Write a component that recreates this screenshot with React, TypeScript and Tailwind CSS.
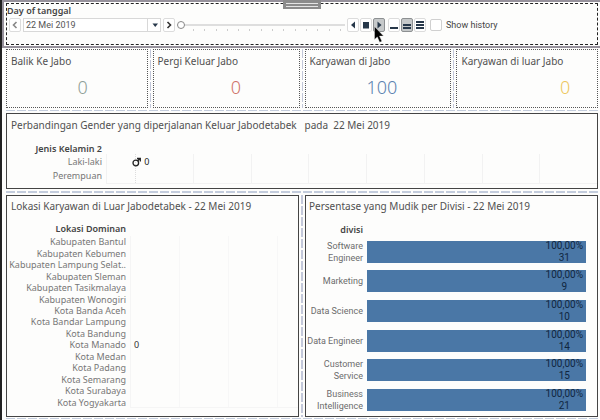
import React, { useState } from "react";

const H_DASH =
  "bg-[repeating-linear-gradient(90deg,#c3ccdc_0_9px,transparent_9px_11px)]";
const V_DASH =
  "bg-[repeating-linear-gradient(180deg,#c3c8da_0_9px,transparent_9px_11px)]";

const kpis = [
  { title: "Balik Ke Jabo", value: "0", tone: "text-[#8f9f98] pl-3", width: "flex-[24]" },
  { title: "Pergi Keluar Jabo", value: "0", tone: "text-[#cf7268] pl-5", width: "flex-[25]" },
  { title: "Karyawan di Jabo", value: "100", tone: "text-[#5a82b0] pl-2", width: "flex-[25]" },
  { title: "Karyawan di luar Jabo", value: "0", tone: "text-[#edc75c] pl-19", width: "flex-[24]" },
];

const places = [
  "Kabupaten Bantul",
  "Kabupaten Kebumen",
  "Kabupaten Lampung Selat..",
  "Kabupaten Sleman",
  "Kabupaten Tasikmalaya",
  "Kabupaten Wonogiri",
  "Kota Banda Aceh",
  "Kota Bandar Lampung",
  "Kota Bandung",
  "Kota Manado",
  "Kota Medan",
  "Kota Padang",
  "Kota Semarang",
  "Kota Surabaya",
  "Kota Yogyakarta",
];

const divisions = [
  { name: "Software Engineer", count: 31 },
  { name: "Marketing", count: 9 },
  { name: "Data Science", count: 10 },
  { name: "Data Engineer", count: 14 },
  { name: "Customer Service", count: 15 },
  { name: "Business Intelligence", count: 21 },
];

function ToolButton({
  label,
  pressed,
  children,
}: {
  label: string;
  pressed?: boolean;
  children: React.ReactNode;
}) {
  return (
    <button
      type="button"
      aria-label={label}
      aria-pressed={pressed}
      className={
        pressed
          ? "flex h-3.5 w-3 shrink-0 items-center justify-center rounded-xs border border-[#8d9092] bg-[#c6c9ca]"
          : "flex h-3.5 w-3 shrink-0 items-center justify-center rounded-xs border border-[#dcdcdc] bg-white"
      }
    >
      {children}
    </button>
  );
}

function Glyph({ d, stroke }: { d: string; stroke?: string }) {
  return (
    <svg viewBox="0 0 10 10" className="size-2.5 shrink-0">
      <path
        d={d}
        fill={stroke ? "none" : "#27384a"}
        stroke={stroke ?? "none"}
        strokeWidth={1.6}
      />
    </svg>
  );
}

function Toolbar() {
  const [day, setDay] = useState("22 Mei 2019");
  const [step, setStep] = useState(0);
  return (
    <header className="relative border-2 border-r-0 border-[#96919b] p-px pr-0.5 pl-0.5 font-[Roboto,'Noto_Sans',sans-serif]">
      <div className="h-[42px] border border-dashed border-[#222]">
        <label
          htmlFor="day"
          className="block font-['Noto_Sans',sans-serif] text-[9px] leading-[13px] font-semibold text-[#444]"
        >
          Day of tanggal
        </label>
        <div className="flex items-center pl-0.5">
          <ToolButton label="Previous day">
            <Glyph d="M6.5 2 3.5 5l3 3" stroke="#888" />
          </ToolButton>
          <div className="relative mx-0.5 w-[138px]">
            <select
              id="day"
              value={day}
              onChange={(e) => setDay(e.target.value)}
              className="block h-3.5 w-full appearance-none border border-[#d8d8d8] bg-white pl-0.5 text-[9px] leading-3 text-[#555]"
            >
              <option>22 Mei 2019</option>
              <option>23 Mei 2019</option>
            </select>
            <span className="pointer-events-none absolute inset-y-0 right-0 flex w-3.5 items-center justify-center border-l border-[#d8d8d8]">
              <Glyph d="M2.500 3.500h5.500L5.250 7z" />
            </span>
          </div>
          <ToolButton label="Next day">
            <Glyph d="M3.500 2 6.500 5l-3 3" stroke="#333" />
          </ToolButton>
          <div className="mx-0.5 w-[168px] pt-1">
            <input
              type="range"
              aria-label="Day slider"
              min={0}
              max={14}
              value={step}
              onChange={(e) => setStep(Number(e.target.value))}
              className="block h-2 w-full appearance-none bg-[linear-gradient(#dedede,#dedede)] bg-[length:100%_2px] bg-center bg-no-repeat [&::-webkit-slider-thumb]:size-2 [&::-webkit-slider-thumb]:appearance-none [&::-webkit-slider-thumb]:rounded-full [&::-webkit-slider-thumb]:border [&::-webkit-slider-thumb]:border-[#888] [&::-webkit-slider-thumb]:bg-white"
            />
            <div className="flex h-1 justify-between pr-1 pl-4">
              {Array.from({ length: 14 }, (_, i) => (
                <span key={i} className="h-0.5 w-px bg-[#ccc]" />
              ))}
            </div>
          </div>
          <div className="relative flex gap-px">
            <ToolButton label="Play backwards">
              <Glyph d="M7 1.500v7L3 5z" />
            </ToolButton>
            <ToolButton label="Stop">
              <Glyph d="M2 2h6v6.500h-6z" />
            </ToolButton>
            <ToolButton label="Play" pressed>
              <Glyph d="M3.500 1.500v7l4-3.500z" />
            </ToolButton>
            <svg
              viewBox="0 0 10 17"
              className="absolute top-2 left-[27px] z-10 h-[17px] w-2.5"
            >
              <path
                d="M.5.500v13l2.800-2.600 2.400 5.400 2.200-1-2.400-5.200h4z"
                fill="#000"
                stroke="#eee"
                strokeWidth={0.4}
              />
            </svg>
          </div>
          <div className="ml-[3px] flex gap-px">
            <ToolButton label="Slow">
              <Glyph d="M1 7h8v2h-8z" />
            </ToolButton>
            <ToolButton label="Normal" pressed>
              <Glyph d="M1 4h8v2h-8zM1 7h8v2h-8z" />
            </ToolButton>
            <ToolButton label="Fast">
              <Glyph d="M1 1h8v2h-8zM1 4h8v2h-8zM1 7h8v2h-8z" />
            </ToolButton>
          </div>
          <label className="ml-1 flex items-center gap-1 text-[9px] leading-3 whitespace-nowrap text-[#444]">
            <input
              type="checkbox"
              className="size-3 appearance-none rounded-xs border border-[#d0d0d0] bg-white"
            />
            Show history
          </label>
        </div>
      </div>
      <button
        type="button"
        aria-label="Move toolbar"
        className="absolute -top-0.5 left-[279px] flex h-[9px] w-[38px] flex-col justify-center gap-0.5 bg-[#8b8b8b] px-[3px]"
      >
        <span className="h-px bg-[#e4e4e4]" />
        <span className="h-px bg-[#e4e4e4]" />
      </button>
    </header>
  );
}

function Kpi({
  title,
  value,
  tone,
  width,
}: {
  title: string;
  value: string;
  tone: string;
  width: string;
}) {
  return (
    <section className={`min-w-0 border border-dotted border-[#555] px-1 pt-[3px] ${width}`}>
      <h2 className="text-[10px] leading-4 whitespace-nowrap">{title}</h2>
      <p className={`pt-1.5 text-center text-[18px] leading-6 font-light ${tone}`}>{value}</p>
    </section>
  );
}

function Gender() {
  return (
    <section className="flex h-[76px] flex-col border border-[#444]">
      <h2 className="pt-[3px] pl-1 text-[10px] leading-4 whitespace-pre">
        {"Perbandingan Gender yang diperjalanan Keluar Jabodetabek   pada  22 Mei 2019"}
      </h2>
      <div className="flex pt-[9px]">
        <div className="w-[95px] shrink-0 text-right text-[9px] text-[#777]">
          <h3 className="leading-[13px] font-semibold text-[#444]">Jenis Kelamin 2</h3>
          <p className="leading-[14px]">Laki-laki</p>
          <p className="leading-[14px]">Perempuan</p>
        </div>
        <div className="mt-3 ml-1 flex h-[30px] flex-1 border-b border-l border-[#f2f2f2]">
          <div className="flex-1" />
          <div className="relative flex-2 border-l border-dotted border-[#ddd] text-[9px] leading-4 text-[#222]">
            <svg
              viewBox="0 0 10 10"
              className="absolute top-[3px] -left-1 size-2.5"
              fill="none"
              stroke="#222"
              strokeWidth={1.3}
            >
              <circle cx="3.800" cy="6" r="2.800" />
              <path d="M5.500 4 8 1.500M5 1.500h3.300V4.500" />
            </svg>
            <span className="ml-2">0</span>
          </div>
          {Array.from({ length: 7 }, (_, i) => (
            <div key={i} className="flex-2 border-l border-[#f2f2f2]" />
          ))}
        </div>
      </div>
    </section>
  );
}

function Locations() {
  return (
    <section className="min-w-0 flex-1 border border-[#444]">
      <h2 className="pt-0.5 pl-1 text-[10px] leading-4 whitespace-nowrap">
        Lokasi Karyawan di Luar Jabodetabek - 22 Mei 2019
      </h2>
      <div className="flex pt-2">
        <div className="w-[119px] shrink-0 text-right text-[9px] text-[#777]">
          <h3 className="leading-[14px] font-semibold text-[#444]">Lokasi Dominan</h3>
          <ul className="grid h-[172px] auto-rows-fr grid-cols-1">
            {places.map((p) => (
              <li key={p} className="flex min-h-0 items-center justify-end leading-[11px] whitespace-nowrap">
                {p}
              </li>
            ))}
          </ul>
        </div>
        <div className="mt-3.5 ml-1 grid h-[172px] flex-1 auto-rows-fr border-b border-l border-[#f5f5f5] bg-[repeating-linear-gradient(90deg,transparent_0_48px,#f7f7f7_48px_49px)]">
          {places.map((p) => (
            <span key={p} className="flex min-h-0 items-center pl-[3px] text-[9px] leading-[11px] text-[#333]">
              {p === "Kota Manado" ? "0" : ""}
            </span>
          ))}
        </div>
      </div>
    </section>
  );
}

function Divisions() {
  return (
    <section className="min-w-0 flex-1 border border-[#444]">
      <h2 className="pt-0.5 pl-[3px] text-[10px] leading-4 whitespace-nowrap">
        Persentase yang Mudik per Divisi - 22 Mei 2019
      </h2>
      <h3 className="w-[57px] pt-[9px] text-right text-[9px] leading-[14px] font-semibold text-[#444]">
        divisi
      </h3>
      <ul className="grid h-[178px] auto-rows-fr pr-[11px] font-[Roboto,sans-serif]">
        {divisions.map((d) => (
          <li key={d.name} className="flex min-h-0 items-center gap-1">
            <span className="flex w-[57px] shrink-0 justify-end text-right text-[9px] leading-3 text-[#6c6c6c]">
              <span className={d.name.startsWith("Data") ? "whitespace-nowrap" : "w-12"}>
                {d.name}
              </span>
            </span>
            <span className="flex h-[22px] flex-1 items-center justify-end bg-[#4a77a6] pr-[3px]">
              <span className="text-center text-[10px] leading-3 text-[#10263f]">
                <span className="block">100,00%</span>
                <span className="block">{d.count}</span>
              </span>
            </span>
          </li>
        ))}
      </ul>
    </section>
  );
}

export default function App() {
  return (
    <main className="border-l-2 border-[#222] bg-[#fdfdfc] font-['Noto_Sans','Open_Sans',sans-serif] text-[#505050]">
      <Toolbar />
      <div className="pr-0.5 pl-1">
        <div className="flex h-[60px] pt-px">
          {kpis.map((k, i) => (
            <React.Fragment key={k.title}>
              {i > 0 && (
                <div className="flex w-[5px] justify-center">
                  <span className={`w-px ${V_DASH}`} />
                </div>
              )}
              <Kpi {...k} />
            </React.Fragment>
          ))}
        </div>
        <div className="flex h-[5px] items-center">
          <span className={`h-px flex-1 ${H_DASH}`} />
        </div>
        <Gender />
        <div className="flex h-1.5 items-center">
          <span className={`h-0.5 flex-1 ${H_DASH}`} />
        </div>
        <div className="flex h-[222px]">
          <Locations />
          <div className="flex w-1.5 justify-center">
            <span className={`w-0.5 ${V_DASH}`} />
          </div>
          <Divisions />
        </div>
        <div className="flex h-[3px] items-center">
          <span className={`h-px flex-1 ${H_DASH}`} />
        </div>
      </div>
    </main>
  );
}
